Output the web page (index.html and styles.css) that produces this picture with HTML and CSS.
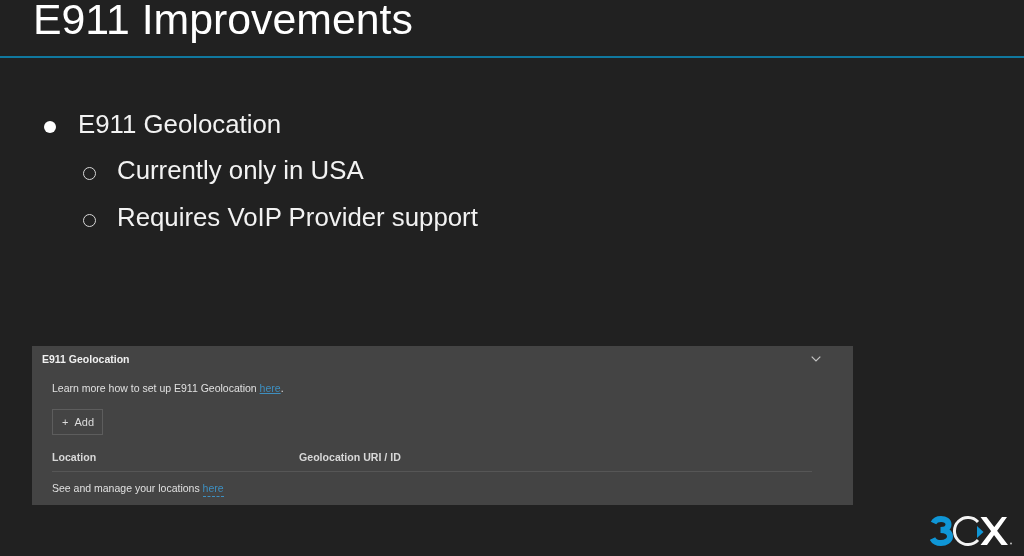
FILE: index.html
```html
<!DOCTYPE html>
<html lang="en">
<head>
<meta charset="utf-8">
<title>E911 Improvements</title>
<link rel="stylesheet" href="styles.css">
</head>
<body>
<div class="slide">
  <header class="head"><h1 class="title">E911 Improvements</h1></header>
  <ul class="outline">
    <li class="item">
      <span class="dot"></span><span>E911 Geolocation</span>
    </li>
    <li class="item sub">
      <span class="ring"></span><span>Currently only in USA</span>
    </li>
    <li class="item sub">
      <span class="ring"></span><span>Requires VoIP Provider support</span>
    </li>
  </ul>
  <section class="panel">
    <div class="panel-head">
      <h2 class="panel-title">E911 Geolocation</h2>
      <svg class="chev" width="10" height="6" viewBox="0 0 10 6"><path d="M.7.7 5 5 9.3.7" fill="none" stroke="#c4c4c4" stroke-width="1.200"/></svg>
    </div>
    <div class="panel-body">
      <p class="learn">Learn more how to set up E911 Geolocation <a class="link" href="#">here</a>.</p>
      <button class="add"><span class="plus">+</span>Add</button>
      <div class="cols"><span class="col-a">Location</span><span>Geolocation URI / ID</span></div>
      <p class="manage">See and manage your locations <a class="link2" href="#">here</a></p>
    </div>
  </section>
  <div class="foot">
    <svg class="logo" width="82" height="30" viewBox="0 0 82 30" role="img" aria-label="3CX">
      <path d="M3.500 7C5 4 8 3 11 3 15.500 3 18.500 5 18.500 8.500 18.500 12 15 14 10.500 14 16 14 20 16 20 20.500 20 24.500 15.500 27 11 27 7 27 4 25.500 2.500 22.500" fill="none" stroke="#0f96d6" stroke-width="6"/>
      <path d="M48 6A13.500 13.500 0 1 0 48 24" fill="none" stroke="#f4f4f4" stroke-width="3"/>
      <path d="M47 10 53.500 16 47 22Z" fill="#0f96d6"/>
      <path d="M50.500 1H56.500L78 29H71.500ZM72 1H77L57 29H50.500Z" fill="#fff"/>
      <circle cx="81" cy="27.500" r="1" fill="#bbb"/>
    </svg>
  </div>
</div>
</body>
</html>
```
FILE: styles.css
```css
* { box-sizing: border-box; }
html, body { margin: 0; padding: 0; }
body { background: #212121; width: 1024px; height: 556px; overflow: hidden; font-family: "Liberation Sans", Arial, sans-serif; }
.slide { display: flex; flex-direction: column; height: 556px; filter: blur(0.4px); }
.head { height: 58px; border-bottom: 2px solid #10789f; padding-left: 33px; }
.title { margin: 0; font-size: 42.800px; font-weight: 400; line-height: 38px; color: #fff; }
.outline { list-style: none; margin: 0; padding: 43px 0 0 44px; height: 288px; }
.item { display: flex; align-items: center; height: 46.600px; font-size: 25.800px; color: #f2f2f2; }
.sub { padding-left: 39px; }
.dot { width: 12px; height: 12px; margin-top: 6px; border-radius: 50%; background: #fff; margin-right: 22px; flex: none; }
.ring { width: 13px; height: 13px; margin-top: 6px; border-radius: 50%; border: 1.500px solid #d8d8d8; margin-right: 21px; flex: none; }
.panel { margin-left: 32px; width: 821px; height: 159px; background: #444; color: #e0e0e0; font-size: 10.500px; }
.panel-head { display: flex; justify-content: space-between; align-items: center; height: 25px; padding: 0 32px 0 10px; }
.panel-title { margin: 0; font-size: 10.500px; font-weight: 700; color: #f0f0f0; }
.panel-body { padding: 0 41px 0 20px; }
.learn { margin: 0; height: 17px; line-height: 34px; }
.link { color: #3e8fc0; }
.add { display: block; margin-top: 21px; width: 51px; height: 26px; border: 1px solid #5d5d5d; background: transparent; color: #dcdcdc; font: 11px "Liberation Sans", Arial, sans-serif; padding: 0 0 0 1px; }
.plus { margin-right: 6px; font-size: 11px; }
.cols { display: flex; height: 30px; margin-top: 7px; align-items: center; font-size: 10.600px; font-weight: 700; color: #d8d8d8; border-bottom: 1px solid #565656; }
.col-a { width: 247px; }
.manage { margin: 9px 0 0; line-height: 14px; }
.link2 { color: #3e8fc0; text-decoration: none; border-bottom: 1px dashed #3e8fc0; padding-bottom: 2px; }
.foot { display: flex; justify-content: flex-end; padding: 11px 12px 0 0; }
.logo { display: block; }
```
